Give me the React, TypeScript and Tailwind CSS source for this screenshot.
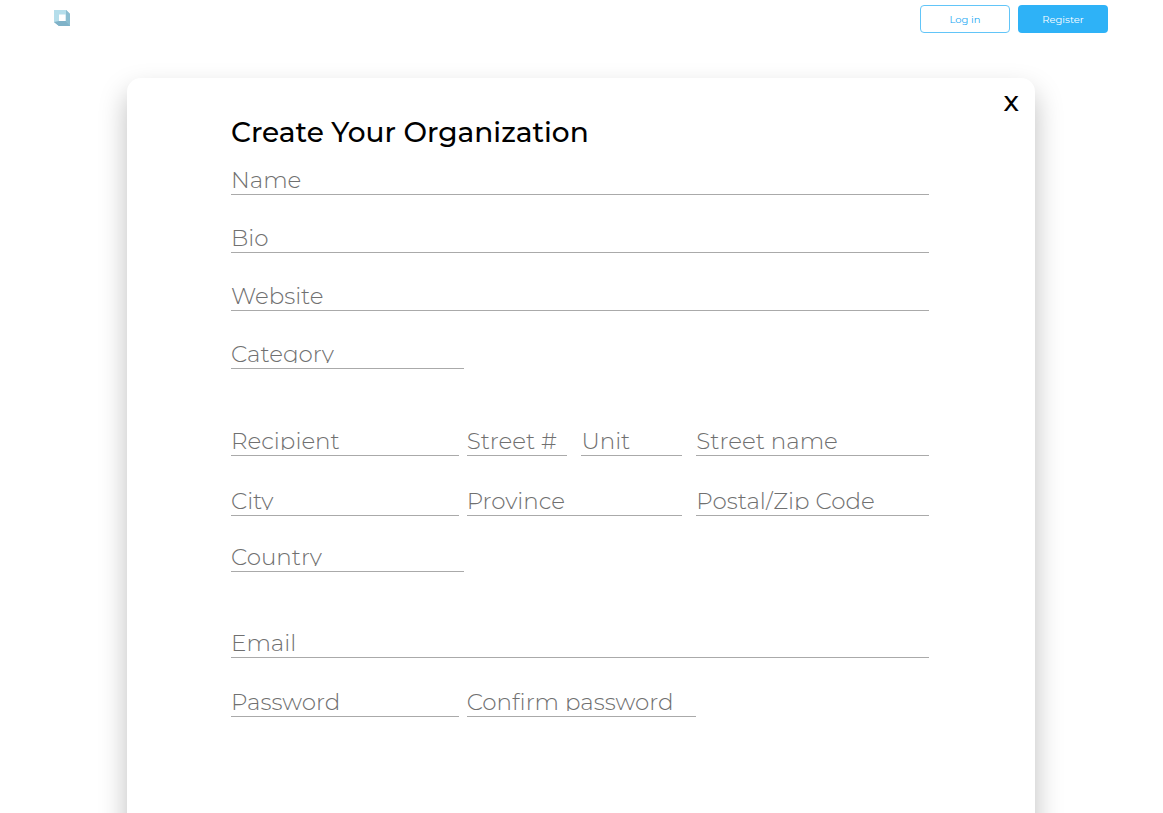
import type { InputHTMLAttributes } from "react";

type FieldProps = InputHTMLAttributes<HTMLInputElement> & { label: string };

function Field({ label, type = "text", ...rest }: FieldProps) {
  return (
    <label className="block min-w-0 border-b border-[#aaaaaa] pb-[5px] focus-within:border-[#2eb2f7]">
      <span className="sr-only">{label}</span>
      <input
        type={type}
        placeholder={label}
        className="block h-[19px] w-full overflow-hidden bg-transparent text-[23px] leading-[19px] font-light text-black outline-none placeholder:text-[#707070]"
        {...rest}
      />
    </label>
  );
}

function Logo() {
  return (
    <svg viewBox="0 0 16 16" className="h-4 w-4" aria-hidden="true">
      <path d="M11 0H12L16 4V16H5L0 12V11Z" fill="#7fb2c8" />
      <path d="M12 0 16 4V16L12 12Z" fill="#8bbdd0" />
      <path d="M0 0H12V12H0Z" fill="#b5deeb" />
      <path d="M0 12 5 11H12V12L16 16H5Z" fill="#7fb2c8" />
      <path d="M5 4.500H11.500V11H5Z" fill="#ffffff" />
    </svg>
  );
}

export default function App() {
  return (
    <div className="min-h-screen bg-white font-['Montserrat','Inter',sans-serif] text-black">
      <header className="flex items-start justify-between pr-[55px] pl-[54px]">
        <a href="#" aria-label="Home" className="mt-[10px]">
          <Logo />
        </a>
        <nav className="mt-[5px] flex gap-2">
          <button
            type="button"
            className="h-7 w-[90px] rounded border border-[#62c5f8] text-[10px] text-[#1ea9f3]"
          >
            Log in
          </button>
          <button
            type="button"
            className="h-7 w-[90px] rounded bg-[#2eb2f7] text-[10px] text-white"
          >
            Register
          </button>
        </nav>
      </header>

      <main className="mt-[45px] mr-32 ml-[127px] rounded-[14px] bg-white pr-[106px] pb-32 pl-[104px] shadow-[0_14px_28px_rgba(0,0,0,0.26)]">
        <div className="-mr-[90px] flex justify-end pt-[9px]">
          <button
            type="button"
            aria-label="Close"
            className="h-7 text-[28px] leading-[28px] font-medium"
          >
            x
          </button>
        </div>

        <h1 className="text-[28px] leading-[34px] font-medium">
          Create Your Organization
        </h1>

        <form>
          <div className="mt-[21px] flex flex-col gap-[33px]">
            <Field label="Name" />
            <Field label="Bio" />
            <Field label="Website" />
            <div className="w-1/3">
              <Field label="Category" />
            </div>
          </div>

          <div className="mt-[62px] grid grid-cols-3">
            <div className="pr-[5px]">
              <Field label="Recipient" />
            </div>
            <div className="grid grid-cols-2 gap-[14px] pr-[14px] pl-[3px]">
              <Field label="Street #" />
              <Field label="Unit" />
            </div>
            <Field label="Street name" />
          </div>
          <div className="mt-[35px] grid grid-cols-3">
            <div className="pr-[5px]">
              <Field label="City" />
            </div>
            <div className="pr-[14px] pl-[3px]">
              <Field label="Province" />
            </div>
            <Field label="Postal/Zip Code" />
          </div>
          <div className="mt-[31px] w-1/3">
            <Field label="Country" />
          </div>

          <div className="mt-[61px]">
            <Field label="Email" type="email" />
          </div>
          <div className="mt-[34px] grid grid-cols-3">
            <div className="pr-[5px]">
              <Field label="Password" type="password" />
            </div>
            <div className="pl-[3px]">
              <Field label="Confirm password" type="password" />
            </div>
          </div>
        </form>
      </main>
    </div>
  );
}
